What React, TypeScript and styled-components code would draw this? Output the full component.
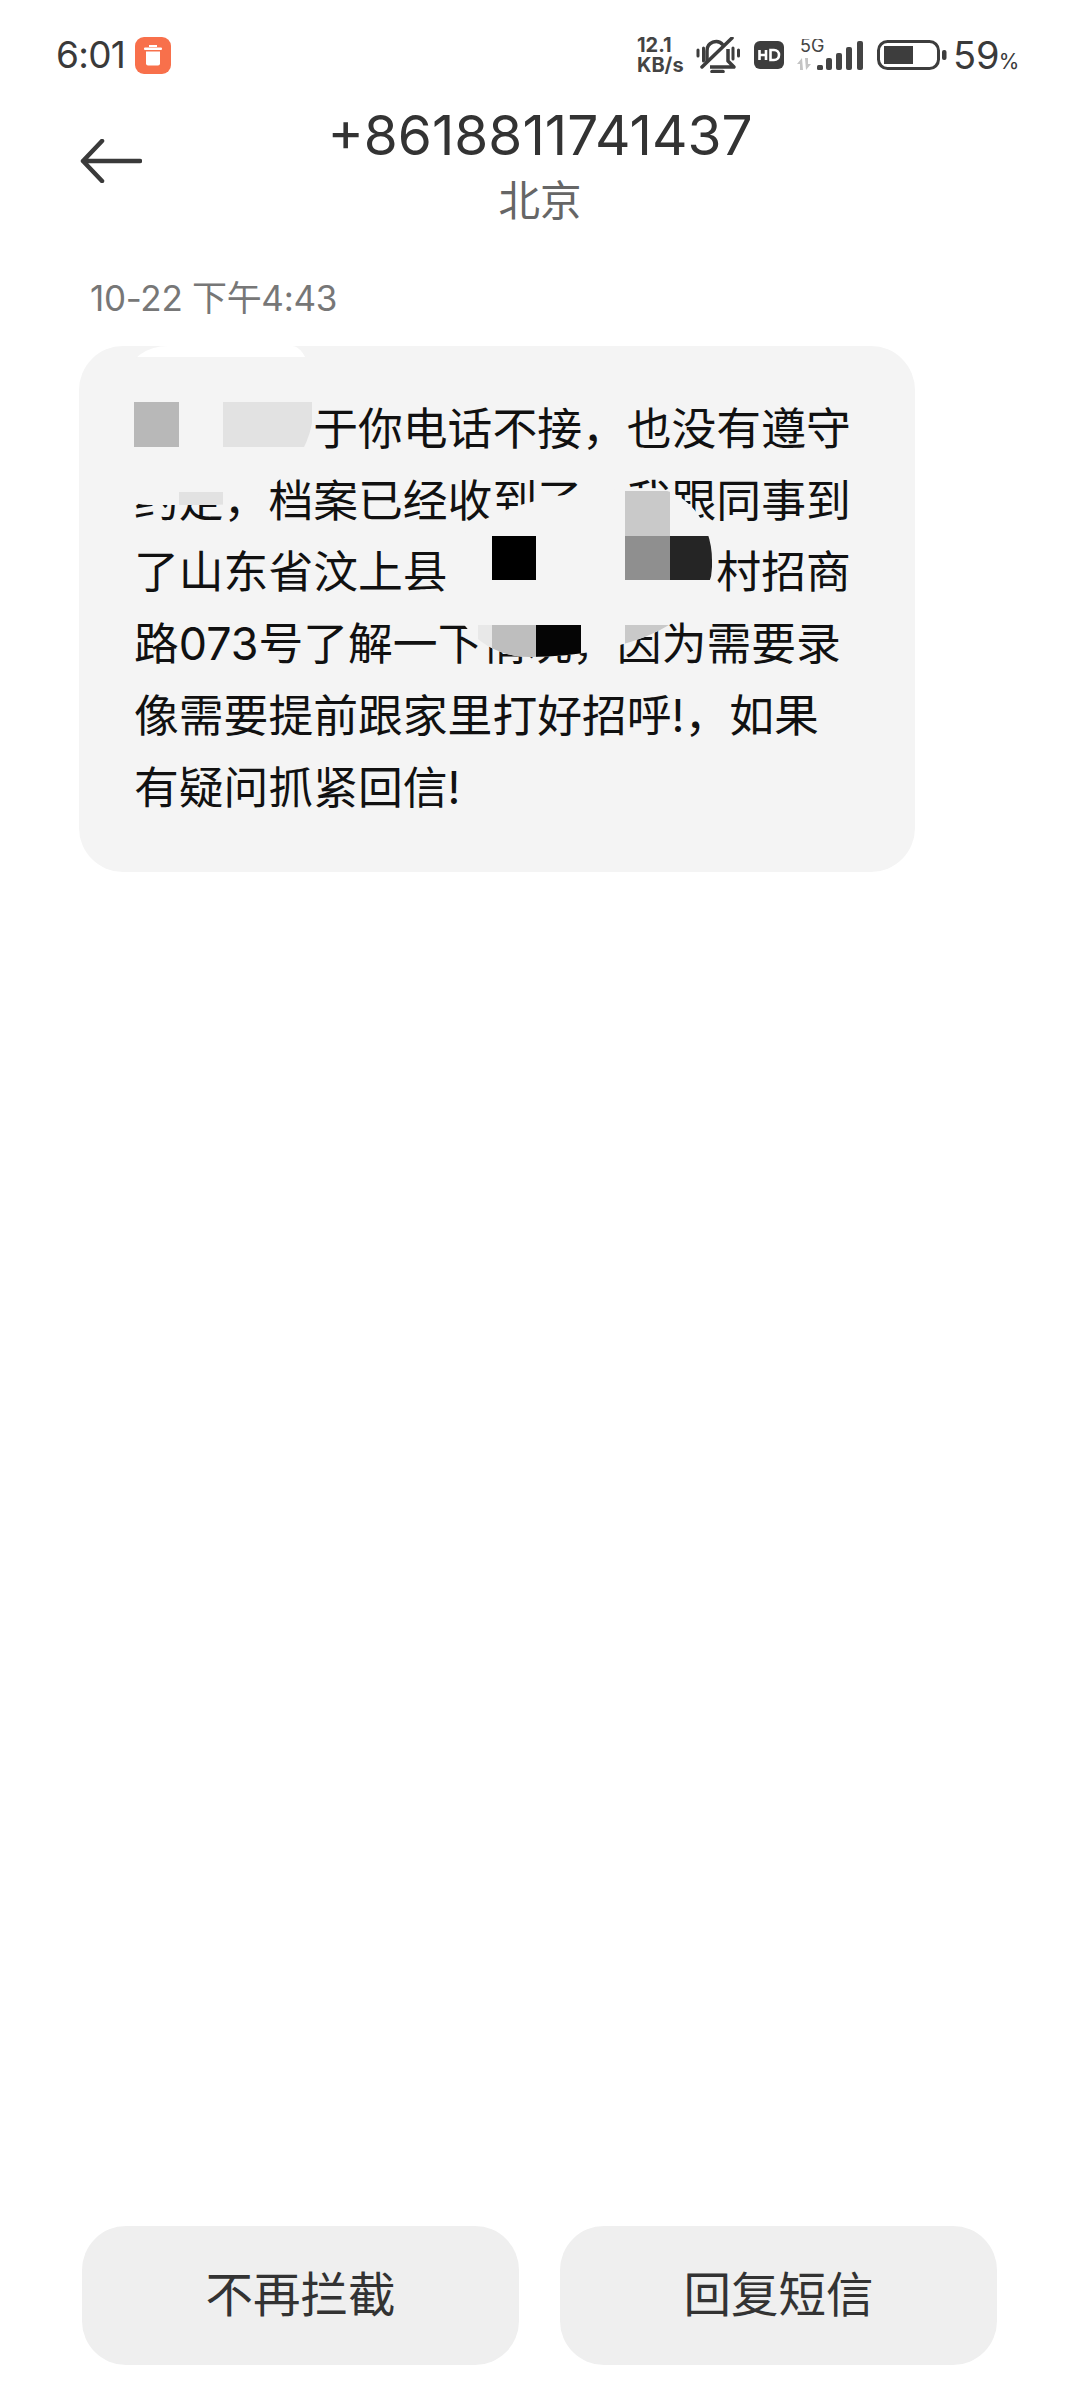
import React from "react";
import styled, { createGlobalStyle } from "styled-components";

const sans = `Inter, "Noto Sans CJK SC", sans-serif`;

const Global = createGlobalStyle`
  html, body { margin: 0; padding: 0; background: #fff; }
  * { box-sizing: border-box; }
`;

const Page = styled.div`
  width: 1080px;
  height: 2400px;
  display: flex;
  flex-direction: column;
  background: #fff;
  font-family: ${sans};
`;

const StatusBar = styled.div`
  height: 76px;
  padding: 34px 62px 0 56px;
  display: flex;
  align-items: center;
  justify-content: space-between;
  color: #3a3a3a;
`;

const StatusLeft = styled.div`
  display: flex;
  align-items: center;
  gap: 10px;
`;

const Clock = styled.span`
  font-size: 37px;
  line-height: 38px;
  letter-spacing: -0.7px;
`;

const StatusRight = styled.div`
  display: flex;
  align-items: center;
`;

const NetSpeed = styled.div`
  width: 49px;
  margin-right: 10px;
  font-size: 20px;
  line-height: 20px;
  font-weight: 700;
  color: #444;
  white-space: nowrap;
`;

const Spacer = styled.span<{ $w: number }>`
  width: ${(p) => p.$w}px;
`;

const Percent = styled.div`
  width: 65px;
  margin: 6px 0 0 6px;
  display: flex;
  align-items: baseline;
  font-size: 38px;
  line-height: 38px;
  color: #3a3a3a;
  white-space: nowrap;
  span {
    font-size: 21px;
    margin-left: -1px;
  }
`;

const Header = styled.header`
  display: grid;
  grid-template-columns: 1fr auto 1fr;
  padding: 31px 80px 0;
  align-items: start;
`;

const BackButton = styled.div`
  padding-top: 32px;
  display: flex;
`;

const TitleBox = styled.div`
  text-align: center;
`;

const Title = styled.div`
  font-size: 55px;
  line-height: 56px;
  color: #333;
`;

const Subtitle = styled.div`
  margin-top: 13px;
  font-size: 41.5px;
  line-height: 50px;
  color: #666;
`;

const DateLabel = styled.div`
  margin: 49px 0 0 90px;
  font-size: 35px;
  line-height: 46px;
  letter-spacing: -0.3px;
  color: #777;
`;

const Bubble = styled.div`
  position: relative;
  width: 836px;
  margin: 25px 0 0 79px;
  padding: 48px 0 48px 55px;
  background: #f4f4f4;
  border-radius: 44px;
  overflow: hidden;
`;

const Line = styled.div`
  font-size: 44.8px;
  line-height: 71.7px;
  color: #111;
  white-space: pre;
`;

// smudge painted over the hidden part of the message
const Patch = styled.div<{ $x: number; $y: number; $w: number; $h: number; $radius: string }>`
  position: absolute;
  left: ${(p) => p.$x}px;
  top: ${(p) => p.$y}px;
  width: ${(p) => p.$w}px;
  height: ${(p) => p.$h}px;
  border-radius: ${(p) => p.$radius};
  background: #f4f4f4;
  overflow: hidden;
`;

const Cell = styled.div<{ $x: number; $y: number; $w: number; $h: number; $color: string }>`
  position: absolute;
  left: ${(p) => p.$x}px;
  top: ${(p) => p.$y}px;
  width: ${(p) => p.$w}px;
  height: ${(p) => p.$h}px;
  background: ${(p) => p.$color};
`;

const Footer = styled.footer`
  margin-top: auto;
  padding: 0 83px 35px 82px;
  display: flex;
  gap: 41px;
`;

const ActionButton = styled.div`
  flex: 1;
  height: 139px;
  padding-bottom: 8px;
  border-radius: 44px;
  background: #efefef;
  display: flex;
  align-items: center;
  justify-content: center;
  font-size: 47.5px;
  color: #333;
`;

const upperCells = [
  { x: 0, y: 0, w: 186, h: 11, color: "#ffffff" },
  { x: 6, y: 56, w: 45, h: 45, color: "#b8b8b8" },
  { x: 95, y: 56, w: 89, h: 45, color: "#e2e2e2" },
  { x: 51, y: 146, w: 44, h: 13, color: "#e2e2e2" },
];

const lowerCells = [
  { x: 173, y: 3, w: 45, h: 45, color: "#c9c9c9" },
  { x: 40, y: 48, w: 44, h: 44, color: "#000000" },
  { x: 173, y: 48, w: 45, h: 44, color: "#8f8f8f" },
  { x: 218, y: 48, w: 45, h: 44, color: "#252525" },
  { x: 26, y: 137, w: 14, h: 32, color: "#e8e8e8" },
  { x: 40, y: 137, w: 44, h: 32, color: "#bebebe" },
  { x: 84, y: 137, w: 45, h: 32, color: "#050505" },
  { x: 173, y: 137, w: 45, h: 32, color: "#c9c9c9" },
  { x: 218, y: 137, w: 45, h: 32, color: "#8f8f8f" },
];

const TrashBadge = () => (
  <svg width="36" height="37" viewBox="0 0 36 37">
    <rect width="36" height="37" rx="9" fill="#f8704b" />
    <rect x="14" y="8" width="8" height="2" fill="#fff" />
    <rect x="9" y="10.500" width="18" height="2.500" rx="1" fill="#fff" />
    <path d="M11 14.500h14v12a2 2 0 0 1-2 2H13a2 2 0 0 1-2-2z" fill="#fff" />
  </svg>
);

const MuteBell = () => (
  <svg width="44" height="36" viewBox="0 0 44 36" fill="none" stroke="#3d3d3d" strokeWidth="3.500">
    <path d="M2 13v6M7.500 11v13M37 11v11M42.500 13v6" strokeWidth="3" strokeLinecap="round" />
    <path d="M11 25V14a9 9 0 0 1 16-6M32 12v12l6 6H14" strokeLinejoin="round" />
    <path d="M6 30 36 1" strokeLinecap="round" />
    <path d="M16 34.500h11" strokeLinecap="round" />
  </svg>
);

const HdBadge = () => (
  <svg width="30" height="28" viewBox="0 0 30 28">
    <rect width="30" height="28" rx="6" fill="#3d3d3d" />
    <path
      d="M5.500 9v10M12 9v10M5.500 14H12M16.500 9v10h3.500c3 0 5-2 5-5s-2-5-5-5z"
      fill="none"
      stroke="#fff"
      strokeWidth="2.600"
    />
  </svg>
);

const Signal = () => (
  <svg width="68" height="32" viewBox="0 0 68 32">
    <text x="4" y="13" fontFamily="Inter, sans-serif" fontSize="18" fill="#444">
      5G
    </text>
    <path d="M6 19l-5 6h3v6h3zM10 31l5-6h-3v-6h-3z" fill="#c4c4c4" />
    <rect x="21" y="26" width="6" height="5" rx="1.500" fill="#444" />
    <rect x="30" y="19" width="6" height="12" rx="2" fill="#444" />
    <rect x="40" y="14" width="6" height="17" rx="2" fill="#444" />
    <rect x="50" y="8" width="6" height="23" rx="2" fill="#444" />
    <rect x="61" y="2" width="6" height="29" rx="2" fill="#444" />
  </svg>
);

const Battery = () => (
  <svg width="70" height="30" viewBox="0 0 70 30">
    <rect x="1.500" y="1.500" width="60" height="27" rx="9" fill="none" stroke="#3d3d3d" strokeWidth="3" />
    <rect x="7" y="6" width="29" height="18" fill="#3d3d3d" />
    <rect x="65" y="10" width="4.500" height="10" rx="2" fill="#3d3d3d" />
  </svg>
);

const BackArrow = () => (
  <svg width="62" height="44" viewBox="0 0 62 44" fill="none" stroke="#3a3a3a" strokeWidth="4.500" strokeLinecap="round" strokeLinejoin="round">
    <path d="M60 22H3M22 2 3 22l19 20" />
  </svg>
);

const App = () => {
  return (
    <Page>
      <Global />
      <StatusBar>
        <StatusLeft>
          <Clock>6:01</Clock>
          <TrashBadge />
        </StatusLeft>
        <StatusRight>
          <NetSpeed>
            12.1
            <br />
            KB/s
          </NetSpeed>
          <MuteBell />
          <Spacer $w={14} />
          <HdBadge />
          <Spacer $w={12} />
          <Signal />
          <Spacer $w={13} />
          <Battery />
          <Percent>
            59<span>%</span>
          </Percent>
        </StatusRight>
      </StatusBar>

      <Header>
        <BackButton>
          <BackArrow />
        </BackButton>
        <TitleBox>
          <Title>+8618811741437</Title>
          <Subtitle>北京</Subtitle>
        </TitleBox>
      </Header>

      <DateLabel>10-22 下午4:43</DateLabel>

      <Bubble>
        <Line>{"　　　　于你电话不接，也没有遵守"}</Line>
        <Line>约定，档案已经收到了，我跟同事到</Line>
        <Line>{"了山东省汶上县　　　　　　村招商"}</Line>
        <Line>路073号了解一下情况，因为需要录</Line>
        <Line>像需要提前跟家里打好招呼!，如果</Line>
        <Line>有疑问抓紧回信!</Line>
        <Patch $x={49} $y={0} $w={186} $h={159} $radius="40px 22px 100px 20px / 30px 57px 102px 10px">
          {upperCells.map((c) => (
            <Cell key={`${c.x}-${c.y}`} $x={c.x} $y={c.y} $w={c.w} $h={c.h} $color={c.color} />
          ))}
        </Patch>
        <Patch $x={373} $y={142} $w={260} $h={169} $radius="198px 62px 182px 78px / 70px 72px 90px 70px">
          {lowerCells.map((c) => (
            <Cell key={`${c.x}-${c.y}`} $x={c.x} $y={c.y} $w={c.w} $h={c.h} $color={c.color} />
          ))}
        </Patch>
      </Bubble>

      <Footer>
        <ActionButton>不再拦截</ActionButton>
        <ActionButton>回复短信</ActionButton>
      </Footer>
    </Page>
  );
};

export default App;
